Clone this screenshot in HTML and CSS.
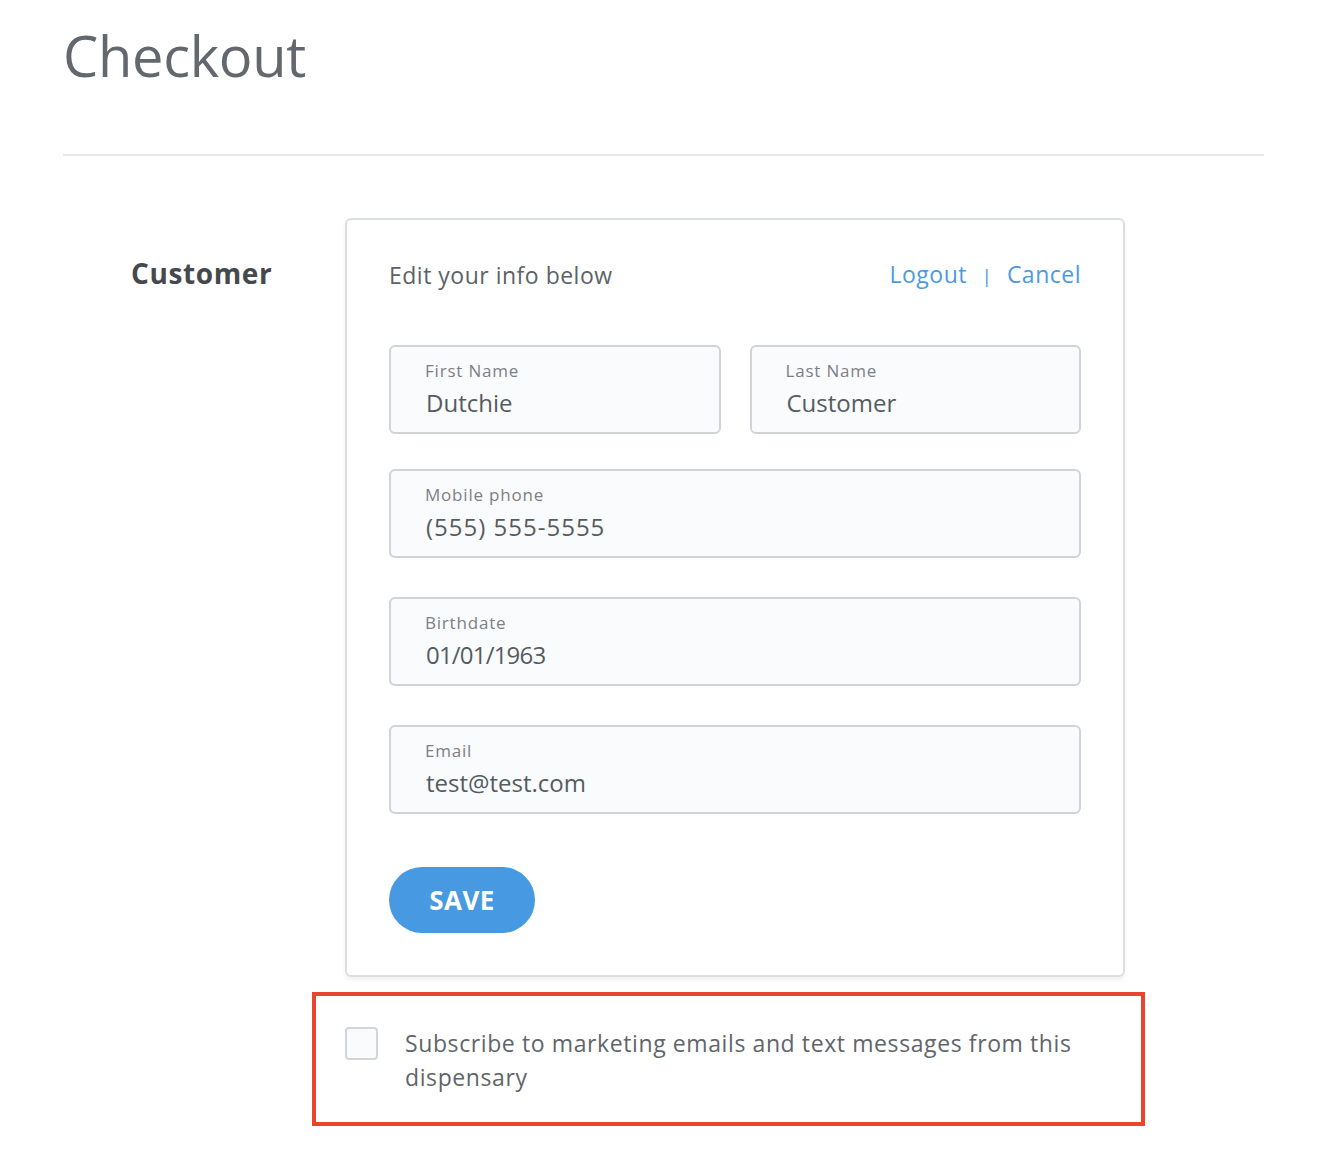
FILE: index.html
```html
<!DOCTYPE html>
<html>
  <head>
    <meta charset="UTF-8">
    <title>Checkout</title>
    <link rel="stylesheet" href="styles.css">
  </head>
  <body>
    <div class="page">
      <h1 class="page-title">Checkout</h1>
      <div class="divider"></div>

      <div class="section">
        <div class="section-label">Customer</div>

        <div class="section-body">
          <div class="card">
            <div class="card-head">
              <span class="card-title">Edit your info below</span>
              <span class="card-links">
                <a href="#">Logout</a>
                <span class="sep">|</span>
                <a href="#">Cancel</a>
              </span>
            </div>

            <div class="field-row">
              <div class="field">
                <label class="field-label">First Name</label>
                <div class="field-value">Dutchie</div>
              </div>
              <div class="field">
                <label class="field-label">Last Name</label>
                <div class="field-value">Customer</div>
              </div>
            </div>

            <div class="field field-wide first-wide">
              <label class="field-label">Mobile phone</label>
              <div class="field-value num">(555) 555-5555</div>
            </div>

            <div class="field field-wide">
              <label class="field-label">Birthdate</label>
              <div class="field-value date">01/01/1963</div>
            </div>

            <div class="field field-wide">
              <label class="field-label">Email</label>
              <div class="field-value">test@test.com</div>
            </div>

            <button class="save-button">SAVE</button>
          </div>

          <!-- opt-in box -->
          <div class="subscribe">
            <span class="checkbox"></span>
            <span class="subscribe-text">Subscribe to marketing emails and text messages from this dispensary</span>
          </div>
        </div>
      </div>
    </div>
  </body>
</html>
```

FILE: styles.css
```css
body {
  margin: 0;
  background-color: #fff;
  font-family: "Open Sans", Arial, sans-serif;
  color: #5c6267;
}

.page {
  padding: 0 0 40px 63px;
  width: 1201px;
}

.page-title {
  margin: 0;
  padding-top: 20px;
  font-size: 56px;
  font-weight: 400;
  line-height: 70px;
  color: #62686d;
  letter-spacing: -0.3px;
}

.divider {
  margin-top: 64px;
  height: 2px;
  background-color: #e5e7e9;
}

.section {
  display: flex;
  margin-top: 62px;
}

.section-label {
  width: 282px;
  padding-left: 68px;
  padding-top: 36px;
  box-sizing: border-box;
  font-size: 28px;
  font-weight: 700;
  letter-spacing: 0.6px;
  color: #45494d;
}

.section-body {
  display: flex;
  flex-direction: column;
}

.card {
  width: 780px;
  box-sizing: border-box;
  border: 2px solid #dcdfe2;
  border-radius: 6px;
  padding: 36px 42px 42px 42px;
  box-shadow: 0 3px 4px rgba(0, 0, 0, 0.06);
}

.card-head {
  display: flex;
  justify-content: space-between;
  align-items: center;
  font-size: 23px;
  line-height: 36px;
  letter-spacing: 0.5px;
}

.card-title {
  color: #5c6267;
}

.card-links a {
  color: #4a9ae2;
  text-decoration: none;
}

.card-links .sep {
  color: #4a9ae2;
  margin: 0 8px;
  font-size: 19px;
}

.field-row {
  display: flex;
  gap: 29px;
  margin-top: 51px;
}

.field {
  flex: 1;
  height: 89px;
  box-sizing: border-box;
  border: 2px solid #d0d4d8;
  border-radius: 6px;
  background-color: #fafbfd;
  padding: 12px 0 0 34px;
}

.field-wide {
  margin-top: 39px;
}

.first-wide {
  margin-top: 35px;
}

.field-label {
  display: block;
  font-size: 17px;
  line-height: 24px;
  letter-spacing: 0.8px;
  color: #7b8085;
}

.field-value {
  margin-top: 4px;
  padding-left: 1px;
  font-size: 24px;
  line-height: 32px;
  color: #555b61;
}

.field-value.num {
  letter-spacing: 1px;
}

.field-value.date {
  letter-spacing: -0.8px;
}

.save-button {
  margin-top: 53px;
  width: 146px;
  height: 66px;
  border: none;
  border-radius: 33px;
  background-color: #4799e2;
  color: #fff;
  font-family: "Open Sans", Arial, sans-serif;
  font-size: 26px;
  font-weight: 700;
  letter-spacing: 0.5px;
  display: block;
  cursor: pointer;
}

.subscribe {
  margin-top: 15px;
  margin-left: -33px;
  width: 833px;
  box-sizing: border-box;
  border: 4px solid #e8442e;
  padding: 31px 60px 28px 29px;
  display: flex;
  align-items: flex-start;
}

.checkbox {
  flex: none;
  width: 33px;
  height: 33px;
  box-sizing: border-box;
  border: 2px solid #d2d6da;
  border-radius: 4px;
  background-color: #fafbfd;
}

.subscribe-text {
  margin-left: 27px;
  margin-top: -1px;
  font-size: 23px;
  line-height: 34px;
  letter-spacing: 0.6px;
  color: #5f656b;
}
```
